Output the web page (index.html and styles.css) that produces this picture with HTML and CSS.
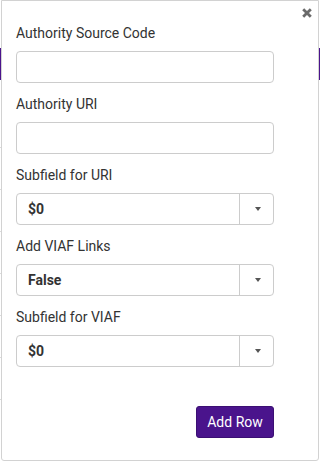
FILE: index.html
```html
<!DOCTYPE html>
<html>
<head>
<meta charset="utf-8">
<link rel="stylesheet" href="styles.css">
</head>
<body>
<div class="page">
  <div class="rowline l1"></div>
  <div class="rowline l2"></div>
  <div class="rowline l3"></div>
  <div class="rowline l4"></div>
  <div class="rowline l5"></div>
  <div class="rowline l6"></div>
  <div class="rowline l7"></div>
  <div class="bar bar-left"></div>
  <div class="bar bar-right"></div>
</div>
<div class="dialog">
  <button class="close" aria-label="Close">
    <svg width="10" height="10" viewBox="0 0 10 10"><path d="M1.2 1.2 L8.8 8.8 M8.8 1.2 L1.2 8.8" stroke="#6a6a6a" stroke-width="2.8" stroke-linecap="butt" fill="none"/></svg>
  </button>
  <form class="form">
    <div class="field">
      <label class="label">Authority Source Code</label>
      <input class="input" type="text">
    </div>
    <div class="field">
      <label class="label">Authority URI</label>
      <input class="input" type="text">
    </div>
    <div class="field">
      <label class="label">Subfield for URI</label>
      <div class="select"><span class="select-value">$0</span><span class="select-arrow"><span class="caret"></span></span></div>
    </div>
    <div class="field">
      <label class="label">Add VIAF Links</label>
      <div class="select"><span class="select-value">False</span><span class="select-arrow"><span class="caret"></span></span></div>
    </div>
    <div class="field">
      <label class="label">Subfield for VIAF</label>
      <div class="select"><span class="select-value">$0</span><span class="select-arrow"><span class="caret"></span></span></div>
    </div>
    <div class="actions">
      <button type="button" class="btn-primary">Add Row</button>
    </div>
  </form>
</div>
</body>
</html>
```
FILE: styles.css
```css
html, body {
  margin: 0;
  padding: 0;
}
body {
  width: 320px;
  height: 462px;
  overflow: hidden;
  position: relative;
  background: #ffffff;
  font-family: Roboto, "Liberation Sans", Arial, sans-serif;
  color: #333333;
}
.page {
  position: absolute;
  inset: 0;
}
.rowline {
  position: absolute;
  left: 0;
  width: 2px;
  height: 1px;
  background: #dcdcdc;
}
.l1 { top: 147px; }
.l2 { top: 189px; }
.l3 { top: 231px; }
.l4 { top: 273px; }
.l5 { top: 315px; }
.l6 { top: 357px; }
.l7 { top: 399px; }
.bar {
  position: absolute;
  top: 48px;
  width: 1px;
  height: 32px;
  background: #4a148c;
}
.bar-left { left: 0; }
.bar-right { right: 0; }
.dialog {
  position: absolute;
  left: 1px;
  top: 0;
  width: 318px;
  height: 461px;
  box-sizing: border-box;
  background: #ffffff;
  border: 1px solid #d2d2d2;
  border-radius: 0 0 3px 3px;
  padding: 22px 0 0 14px;
}
.close {
  position: absolute;
  top: 6px;
  right: 5px;
  width: 12px;
  height: 12px;
  padding: 0;
  margin: 0;
  border: 0;
  background: transparent;
  display: flex;
  align-items: center;
  justify-content: center;
}
.form {
  width: 258px;
  margin: 0;
  display: flex;
  flex-direction: column;
}
.field {
  display: flex;
  flex-direction: column;
  margin-bottom: 11px;
}
.label {
  font-size: 14px;
  line-height: 20px;
  color: #333333;
  margin-bottom: 8px;
}
.input {
  box-sizing: border-box;
  width: 258px;
  height: 32px;
  margin: 0;
  border: 1px solid #cccccc;
  border-radius: 4px;
  background: #ffffff;
  padding: 0 10px;
  font: inherit;
}
.select {
  box-sizing: border-box;
  width: 258px;
  height: 32px;
  border: 1px solid #cccccc;
  border-radius: 4px;
  display: flex;
  align-items: stretch;
  background: #ffffff;
}
.select-value {
  flex: 1;
  display: flex;
  align-items: center;
  padding-left: 11px;
  font-size: 14px;
  font-weight: 700;
  color: #333333;
}
.select-arrow {
  width: 34px;
  border-left: 1px solid #cccccc;
  display: flex;
  align-items: center;
  justify-content: center;
  padding-left: 2px;
  box-sizing: border-box;
}
.caret {
  width: 0;
  height: 0;
  border-left: 3px solid transparent;
  border-right: 3px solid transparent;
  border-top: 4px solid #555555;
}
.actions {
  display: flex;
  justify-content: flex-end;
  margin-top: 28px;
}
.btn-primary {
  box-sizing: border-box;
  width: 78px;
  height: 32px;
  margin: 0;
  padding: 0;
  border: 1px solid #3b0f73;
  border-radius: 3px;
  background: #4a148c;
  color: #ffffff;
  font-family: Roboto, "Liberation Sans", Arial, sans-serif;
  font-size: 14px;
}
```
